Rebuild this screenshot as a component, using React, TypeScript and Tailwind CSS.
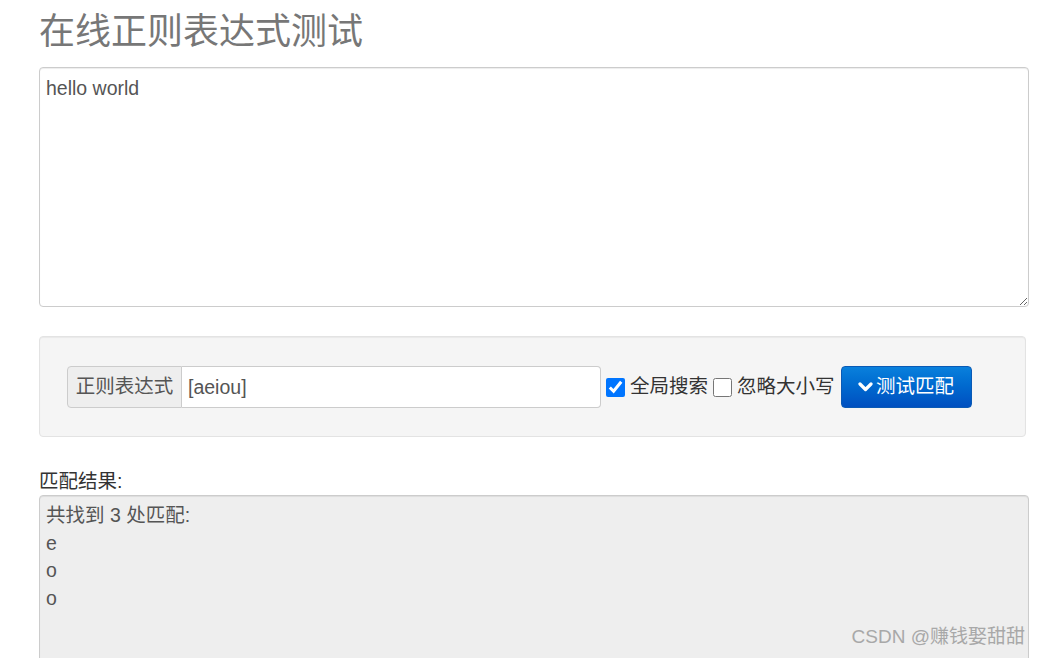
import React from "react";

export default function App() {
  const font = { fontFamily: '"Liberation Sans", Arial, "Noto Sans CJK SC", sans-serif' };
  return (
    <div className="relative h-[658px] w-[1040px] overflow-hidden bg-white text-[#333]" style={font}>
      <div className="ml-[39px] w-[990px] pt-[10px]">
        <h1 className="h-[44px] text-[36px] leading-[44px] text-[#777]">在线正则表达式测试</h1>
        <textarea
          className="mt-[13px] block h-[240px] w-[990px] resize-y rounded-[4px] border border-[#ccc] bg-white px-[6px] py-[7px] text-[19.5px] leading-[27px] text-[#555] shadow-[inset_0_1px_1px_rgba(0,0,0,0.075)] outline-none"
          defaultValue="hello world"
        />
        <div className="mt-[29px] h-[101px] w-[987px] rounded-[4px] border border-[#e3e3e3] bg-[#f5f5f5] pl-[27px] pt-[29px] shadow-[inset_0_1px_1px_rgba(0,0,0,0.05)]">
          <div className="flex items-center">
            <div className="flex h-[42px] items-center">
              <span className="flex h-[42px] w-[115px] items-center justify-center rounded-l-[4px] border border-[#ccc] bg-[#eee] text-[19.5px] text-[#555]">
                正则表达式
              </span>
              <input
                className="h-[42px] w-[419px] rounded-r-[4px] border border-l-0 border-[#ccc] bg-white px-[6px] text-[19.5px] text-[#555] outline-none"
                defaultValue="[aeiou]"
              />
            </div>
            <label className="ml-[5px] flex items-center text-[19.5px]">
              <input type="checkbox" defaultChecked className="m-0 h-[19px] w-[19px] accent-[#0075ff]" />
              <span className="ml-[5px]">全局搜索</span>
            </label>
            <label className="ml-[5px] flex items-center text-[19.5px]">
              <input type="checkbox" className="m-0 h-[19px] w-[19px]" />
              <span className="ml-[5px]">忽略大小写</span>
            </label>
            <button className="ml-[6px] flex h-[42px] w-[131px] items-center justify-center rounded-[4px] border border-[#0a5ab5] bg-gradient-to-b from-[#0a80dc] to-[#004fc0] text-[19.5px] text-white">
              <svg width="15" height="12" viewBox="0 0 15 12" className="mr-[3px]">
                <path d="M2 3 L7.5 8.5 L13 3" fill="none" stroke="white" strokeWidth="3.2" strokeLinecap="round" strokeLinejoin="round" />
              </svg>
              测试匹配
            </button>
          </div>
        </div>
        <div className="mt-[31px] text-[19.5px] leading-[27px] text-[#333]">匹配结果:</div>
        <div className="h-[220px] w-[990px] rounded-[4px] border border-[#ccc] bg-[#eee] px-[6px] py-[6px] text-[19.5px] leading-[27.5px] text-[#555] shadow-[inset_0_1px_1px_rgba(0,0,0,0.075)]">
          <div>共找到 3 处匹配:</div>
          <div>e</div>
          <div>o</div>
          <div>o</div>
        </div>
      </div>
      <div className="absolute bottom-[7px] right-[15px] text-[19px] text-[#a8a8a8]">CSDN @赚钱娶甜甜</div>
    </div>
  );
}
